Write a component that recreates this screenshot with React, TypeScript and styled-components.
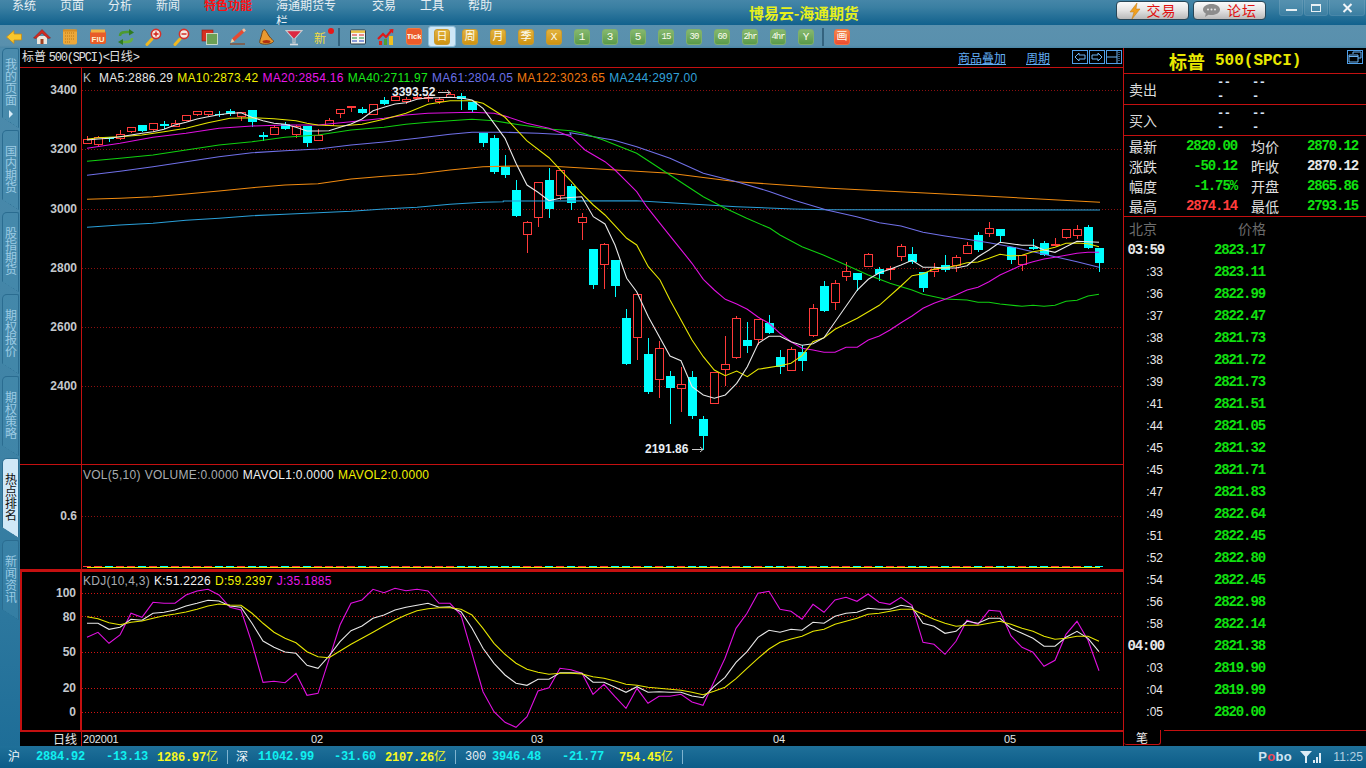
import React from 'react';
import styled, { createGlobalStyle, css } from 'styled-components';

const CJK = '"Noto Sans CJK SC", sans-serif';
const SANS = '"Liberation Sans", "Noto Sans CJK SC", sans-serif';
const MONO = '"Liberation Mono", "Noto Sans CJK SC", monospace';
const RED = '#c41010';

const Global = createGlobalStyle`
  html, body { margin: 0; padding: 0; width: 1366px; height: 768px; overflow: hidden; background: #000; }
  * { box-sizing: border-box; }
`;

const Page = styled.div`
  width: 1366px; height: 768px; display: flex; flex-direction: column; font-family: ${CJK};
`;

/* ---------- title bar ---------- */
const TitleBar = styled.header`
  height: 25px; display: flex; align-items: center; padding-left: 12px;
  background: linear-gradient(#4586a8, #3a7fa2 30%, #11618d);
`;
const Menu = styled.nav`display: flex; gap: 24px; width: 480px; flex: none;`;
const MenuItem = styled.span<{ $hot?: boolean }>`
  font-size: 12px; line-height: 16px; color: ${p => (p.$hot ? '#ff1010' : '#e6eef3')};
  font-weight: ${p => (p.$hot ? 700 : 400)};
`;
const AppTitle = styled.h1`
  margin: 0 0 0 257px; width: 110px; white-space: nowrap; flex: none; font-size: 15px; line-height: 18px; font-weight: 700; color: #e6f01c;
  letter-spacing: -0.1px;
`;
const LinkBtn = styled.button`
  height: 19px; width: 73px; margin-top: -4px; padding: 0; display: flex; align-items: center; justify-content: center; gap: 6px;
  border: 1px solid #274657; border-radius: 4px;
  background: linear-gradient(#fbfbfb, #e2e2e2 50%, #b9b9b9);
  color: #e01010; font: 14px/17px ${CJK}; letter-spacing: 1px;
  & + & { margin-left: 4px; }
  &:first-of-type { margin-left: 257px; }
`;
const WinBtns = styled.div`display: flex; gap: 1px; margin-left: 13px; align-self: flex-start;`;
const WinBtn = styled.div<{ $w: number }>`
  width: ${p => p.$w}px; height: 16px; display: flex; align-items: center; justify-content: center;
  background: rgba(255,255,255,.09); border: 1px solid rgba(255,255,255,.08); border-top: 0;
  border-radius: 0 0 3px 3px;
`;

/* ---------- toolbar ---------- */
const Toolbar = styled.div`
  height: 23px; display: flex; align-items: center;
  background: linear-gradient(#5b91ae, #5990ad 88%, #4a86a6);
`;
const ToolCell = styled.div<{ $active?: boolean }>`
  width: 28px; height: 21px; display: flex; align-items: center; justify-content: center; flex: none;
  border-radius: 3px; border: 1px solid transparent;
  ${p => p.$active && css`background: #cfe7f6; border-color: #8fc0dc;`}
`;
const ToolSep = styled.i`
  width: 8px; height: 18px; flex: none; display: block; position: relative;
  &::after { content: ''; position: absolute; left: 2px; top: 0; width: 2px; height: 18px; background: #34637e; }
`;
const Tile = styled.span<{ $tone: 'gold' | 'green' | 'red'; $tight?: boolean }>`
  width: 16px; height: 16px; display: flex; align-items: center; justify-content: center; border-radius: 3px;
  color: #fdfdf0; font: 11px/16px ${MONO}; overflow: hidden; white-space: nowrap;
  ${p => p.$tight && css`font-size: 9px; letter-spacing: -1px;`}
  background: ${p =>
    p.$tone === 'gold' ? 'linear-gradient(#e2b23e, #cf9312)'
      : p.$tone === 'green' ? 'linear-gradient(#86b86e, #5a9a4a)'
        : 'linear-gradient(#f58a50, #ee4c30)'};
  border: 1px solid ${p => (p.$tone === 'green' ? '#7fb06a' : p.$tone === 'gold' ? '#c89a30' : '#f47040')};
`;

/* ---------- body ---------- */
const Body = styled.div`flex: 1; display: flex; min-height: 0;`;
const SideTabs = styled.aside`
  width: 20px; flex: none; display: flex; flex-direction: column; gap: 2px; padding-left: 2px;
  background: linear-gradient(#4d8bac, #3d82a5 60%, #1e6e98);
`;
const SideTab = styled.div<{ $on?: boolean }>`
  position: relative; width: 17px; height: 80px; flex: none; padding-top: 14px;
  display: flex; flex-direction: column; align-items: center;
  border: 1px solid #2a6c90; border-bottom: 0; border-radius: 5px 2px 0 0;
  clip-path: polygon(0 0, 100% 0, 100% 100%, 0 calc(100% - 11px));
  background: ${p => (p.$on ? '#d0e8f7' : 'rgba(70,140,175,.35)')};
  color: ${p => (p.$on ? '#111' : '#9ccbe4')};
  &::after {
    content: ''; position: absolute; left: -1px; right: -1px; bottom: 0; height: 11px;
    background: linear-gradient(to top right, transparent calc(50% - 1px), #23658a calc(50% - 1px), #23658a 50%, transparent 50%);
  }
`;
const FirstTab = styled(SideTab)`padding-top: 9px;`;
const TabText = styled.span`writing-mode: vertical-rl; font-size: 12px; line-height: 14px;`;
const TabArrow = styled.i`
  margin-top: 4px; width: 0; height: 0; border-left: 4px solid #d8ecf8; border-top: 4px solid transparent; border-bottom: 4px solid transparent;
`;

const Main = styled.main`flex: 1; display: flex; background: #000; min-width: 0;`;
const ChartCol = styled.section`width: 1103px; flex: none; display: flex; flex-direction: column;`;
const ChartHead = styled.div`
  height: 20px; flex: none; display: flex; align-items: center; padding: 0 1px 1px 2px; border-bottom: 1px solid ${RED};
`;
const ChartName = styled.span`
  font-size: 12px; line-height: 16px; color: #e0e0e0; white-space: nowrap; flex: 1;
`;
const Narrow = styled.span`font-family: ${MONO}; font-size: 12px; letter-spacing: -1.2px;`;
const HeadLink = styled.a<{ $w: number }>`
  width: ${p => p.$w}px; font-size: 12px; line-height: 15px; color: #62aef5; text-decoration: underline; flex: none;
`;
const MiniBtn = styled.span`
  width: 16px; height: 14px; border: 1px solid #4f9fe8; margin-left: 1px; display: flex; align-items: center; justify-content: center; flex: none;
`;

const Pane = styled.div<{ $h: number; $active?: boolean }>`
  position: relative; height: ${p => p.$h}px; flex: none; display: flex;
  ${p => p.$active
    ? css`border-top: 2px solid ${RED}; border-bottom: 2px solid ${RED};`
    : css`border-bottom: 1px solid ${RED};`}
`;
const Axis = styled.div<{ $active?: boolean }>`
  position: relative; width: 62px; flex: none;
  border-right: ${p => (p.$active ? 2 : 1)}px solid ${RED};
  border-left: ${p => (p.$active ? `2px solid ${RED}` : 'none')};
`;
const Tick = styled.span<{ $y: number }>`
  position: absolute; right: 4px; top: ${p => p.$y}px; transform: translateY(-50%);
  font: 700 12px/14px ${SANS}; color: #c4c8cc;
`;
const Legend = styled.div<{ $top: number }>`
  position: absolute; left: 63px; top: ${p => p.$top}px; display: flex; gap: 4px; white-space: nowrap;
  font: 12px/14px ${SANS}; letter-spacing: 0.26px;
`;
const LegendItem = styled.span<{ $c: string; $w?: number }>`
  color: ${p => p.$c};
  ${p => p.$w && css`width: ${p.$w}px;`}
`;
const Plot = styled.svg`display: block; flex: none; width: 1041px; height: 100%;`;

const DateRow = styled.div`flex: 1; position: relative; display: flex;`;
const DateTag = styled.span`
  width: 62px; flex: none; border-right: 1px solid ${RED}; text-align: right; padding-right: 4px;
  font-size: 12px; line-height: 14px; color: #e8e8e8;
`;
const DateMark = styled.span<{ $x: number }>`
  position: absolute; left: ${p => p.$x}px; top: 1px; font: 11px/12px ${SANS}; color: #e6e6e6; letter-spacing: -0.2px;
`;

/* ---------- quote panel ---------- */
const Panel = styled.aside`flex: 1; display: flex; flex-direction: column; border-left: 1px solid ${RED}; min-width: 0;`;
const PanelTitle = styled.div`
  position: relative; height: 26px; flex: none; padding-left: 45px; display: flex; align-items: center; gap: 10px;
  border-bottom: 1px solid ${RED}; color: #e8e800; font-size: 18px; font-weight: 700; white-space: nowrap;
`;
const TitleLatin = styled.span`font: 700 16px/20px ${MONO};`;
const RestoreBtn = styled.span`
  position: absolute; right: 3px; top: 2px; width: 16px; height: 14px; border: 1px solid #4f9fe8;
`;
const BookRow = styled.div`
  height: 31px; flex: none; display: flex; align-items: center; padding-left: 5px; border-bottom: 1px solid ${RED};
`;
const BookLabel = styled.span`width: 88px; flex: none; font-size: 14px; line-height: 18px; color: #dcdcdc;`;
const Dashes = styled.span`
  width: 20px; margin-right: 15px; flex: none; font: 700 12px/14px ${MONO}; letter-spacing: -0.5px; color: #d8e4f8; margin-top: 2px;
`;
const Stats = styled.div`
  height: 81px; flex: none; padding-left: 5px; display: grid; grid-template-columns: 108px 107px; column-gap: 14px;
  grid-auto-rows: 20px; border-bottom: 1px solid ${RED};
`;
const Stat = styled.div`display: flex; justify-content: space-between; align-items: center;`;
const StatLabel = styled.span`font-size: 14px; line-height: 18px; color: #e0e0e0;`;
const Num = styled.span<{ $c: string }>`
  font: 700 14px/18px ${MONO}; letter-spacing: -1.1px; color: ${p => p.$c};
`;
const TapeHead = styled.div`
  height: 22px; flex: none; display: flex; padding-left: 5px; font-size: 14px; line-height: 22px; color: #6c6c6c; gap: 81px;
`;
const Tape = styled.div`flex: 1; display: flex; flex-direction: column;`;
const TapeRow = styled.div`
  height: 22px; flex: none; display: grid; grid-template-columns: 40px 101px; align-items: center;
`;
const TapeTime = styled.span<{ $bold?: boolean }>`
  text-align: right; color: #e8e8e8;
  ${p => p.$bold
    ? css`font: 700 14px/18px ${MONO}; letter-spacing: -1.1px;`
    : css`font: 12px/16px ${SANS}; padding-right: 1px;`}
`;
const TapeFoot = styled.div`height: 16px; flex: none; display: flex;`;
const FootTab = styled.span`
  width: 37px; height: 15px; flex: none; border: 1px solid ${RED}; border-width: 0 1px 1px 0; border-radius: 0 0 3px 3px;
  text-align: center; font-size: 12px; line-height: 15px; color: #eee;
`;
const FootRule = styled.span`flex: 1; margin-left: 3px; border-top: 1px solid ${RED};`;

/* ---------- status bar ---------- */
const StatusBar = styled.footer`
  height: 22px; flex: none; display: flex; align-items: center; padding-left: 8px;
  background: linear-gradient(#1f7099, #0c5c88);
`;
const SCell = styled.span<{ $w: number; $c: string; $left?: boolean; $plain?: boolean }>`
  width: ${p => p.$w}px; flex: none; color: ${p => p.$c}; text-align: ${p => (p.$left ? 'left' : 'right')}; white-space: nowrap;
  font: ${p => (p.$plain ? '400' : '700')} 12px/16px ${MONO}; letter-spacing: -0.2px;
`;
const Yi = styled.span`font-family: ${CJK}; font-weight: 400; letter-spacing: 0;`;
const SSep = styled.span<{ $w: number }>`
  width: ${p => p.$w}px; flex: none; position: relative; height: 14px;
  &::after { content: ''; position: absolute; left: 9px; top: 0; width: 1px; height: 14px; background: #7fb4d0; }
`;
const StatusRight = styled.div`margin-left: auto; display: flex; align-items: center; padding-right: 3px;`;
const Pobo = styled.span`font: 700 13px/16px ${SANS}; color: #cfe4f2; width: 42px; letter-spacing: 0.3px;`;
const PoboO = styled.span`color: #f04858;`;
const Clock = styled.span`font: 12px/16px ${SANS}; color: #b6d2e2; margin-left: 11px; letter-spacing: 0.1px;`;

/* ---------- data ---------- */
type C = [number, number, number, number, number];
const z7: C[] = [
  [168,178,188,190,1],[168,170,193,196,1],[170,172,178,182,0],[150,163,175,178,1],[142,142,152,155,1],[135,135,153,153,0],
  [130,130,147,150,1],[123,131,138,143,0],[120,130,137,137,1],[106,106,119,119,1],[94,94,101,104,1],[94,94,101,104,1],
  [93,101,105,107,0],[87,93,101,105,0],[97,97,107,120,1],[90,90,125,138,0],[155,166,171,180,0],[135,142,161,162,1],
  [127,132,146,146,0],[135,138,161,172,1],[138,138,188,197,0],[148,166,179,180,1],[114,121,136,136,1],[88,88,98,111,1],
  [78,78,80,93,1],[81,87,98,100,0],[73,73,103,103,1],[51,60,72,72,0],[48,48,59,59,1],[50,56,62,70,1],
  [46,50,53,53,1],[46,52,55,62,1],[50,58,62,68,1],[36,42,50,50,1],[40,48,56,86,0],[66,66,90,95,0],
];
const z8: C[] = [
  [38,38,68,77,0],[45,54,155,160,0],[105,140,165,170,0],[180,210,287,287,0],[303,307,341,395,1],[187,187,290,317,1],
  [145,180,266,290,0],[151,151,226,238,1],[192,198,248,268,0],[280,292,307,356,1],[387,387,495,503,0],[370,373,433,503,1],
  [420,420,497,527,0],[567,594,731,731,0],[523,523,650,718,1],[654,702,815,819,0],[663,685,778,830,1],[753,769,803,908,0],
  [741,793,805,872,1],[753,771,887,893,0],[888,897,947,987,0],[757,757,850,850,1],[648,733,748,795,1],[588,595,710,713,1],
  [606,660,677,695,0],[598,598,658,672,1],[585,609,638,638,0],
];
const z9: C[] = [
  [450,471,500,518,0],[442,448,510,510,1],[436,456,482,510,0],[312,325,405,407,1],[243,258,332,332,0],[240,250,307,327,1],
  [186,214,227,239,1],[220,220,240,270,0],[160,163,199,199,1],[200,208,221,240,0],[198,204,206,236,1],[132,139,167,180,1],
  [141,163,187,189,0],[216,216,264,273,0],[190,206,214,228,1],[165,196,209,212,0],[165,172,194,212,1],[127,136,158,158,1],
  [96,106,150,152,0],[66,83,100,107,1],[88,88,107,127,0],[142,142,179,188,0],[166,166,191,209,1],[117,142,147,147,0],
  [123,130,164,164,0],[114,133,136,136,1],[88,88,110,113,1],[76,88,104,114,1],[75,81,143,143,0],[144,144,188,212,0],
];
const conv = (a: C[], b: number) => a.map(c => [b + c[0] / 3, b + c[1] / 3, b + c[2] / 3, b + c[3] / 3, c[4]] as C);
const candles: C[] = [...conv(z7, 80), ...conv(z8, 120), ...conv(z9, 200)];
const cx = (i: number) => 87 + 11 * i;

const tr = (bx: number, by: number, a: number[]) => {
  const out: string[] = [];
  for (let i = 0; i < a.length; i += 2) out.push(`${(bx + a[i] / 3).toFixed(1)},${(by + a[i + 1] / 3).toFixed(1)}`);
  return out;
};
const p7 = (...a: number[]) => tr(80, 80, a);
const p8 = (...a: number[]) => tr(470, 120, a);
const p9 = (...a: number[]) => tr(760, 200, a);
const p3 = (...a: number[]) => tr(930, 0, a);

const MAS: { c: string; d: string[] }[] = [
  { c: '#2a9fd8', d: [
    ...p7(21,442,120,435,219,430,318,421,417,415,516,407,615,403,714,398,813,394,912,387,1011,382,1110,373,1209,367,1270,365),
    ...p8(100,243,500,242,800,260), ...p9(100,27,200,29), ...p3(510,630)] },
  { c: '#f08a10', d: [
    ...p7(21,358,120,355,219,350,318,342,417,333,516,323,615,315,714,311,813,297,912,289,1011,282,1110,270,1209,260,1308,258,1407,258),
    ...p8(600,160,800,185,1080,205), ...p3(0,580,150,587,510,607)] },
  { c: '#7070e8', d: [
    ...p7(21,286,120,274,219,260,318,245,417,230,516,218,615,212,714,207,813,195,912,186,1011,175,1110,163,1176,157,1275,157,1374,160,1473,165),
    ...p8(300,38,430,60,500,80,600,115,700,160,800,185,900,215),
    ...p9(100,0,200,30,290,50,358,68,423,78,489,97,555,108,621,118,687,128,753,140,819,155,885,170,951,185,1017,202)] },
  { c: '#10d010', d: [
    ...p7(21,244,120,235,219,225,318,210,417,195,516,185,615,172,714,165,813,150,912,142,978,133,1044,127,1110,122,1176,118,1242,122,1308,133,1407,147,1473,152),
    ...p8(340,40,400,60,500,100,600,165,700,230,766,265,830,295),
    ...p9(30,85,60,105,126,140,190,165,258,195,325,225,390,250,456,270,489,283,555,297,621,300,654,307,687,307,720,312,786,319,819,316,852,319,885,316,918,304,951,301,984,288,1017,283)] },
  { c: '#e010e0', d: [
    ...p7(21,205,120,190,219,172,318,160,417,145,516,138,615,135,714,135,813,125,912,115,978,105,1044,100,1110,98,1176,97,1242,100,1275,108,1340,130,1407,145,1473,170),
    ...p8(345,90,405,125,435,150,470,185,500,215,530,260,570,310,630,385,666,430,700,478,733,510,766,538,800,552,832,568,865,592),
    ...p9(0,355,27,370,60,400,93,425,126,445,159,450,192,457,225,457,258,442,292,442,325,420,358,408,390,390,423,368,456,348,489,325,522,310,555,298,588,285,621,270,654,262,687,245,720,225,753,210,786,195,819,185,852,177,885,172,918,166,951,160,984,157,1017,157)] },
  { c: '#e6e600', d: [
    ...p7(21,178,54,173,87,172,120,170,186,165,252,155,318,145,384,128,450,115,516,113,582,116,648,122,681,130,714,135,780,138,846,133,912,118,978,100,1044,73,1110,62,1176,62,1209,70,1275,112,1340,182,1407,233),
    ...p8(300,180,335,220,370,255,405,285,470,355,500,375,535,440,570,480,600,540,633,600,666,660,700,710,733,750,766,767,800,753,832,770,865,747),
    ...p9(0,507,60,497,93,490,126,467,159,425,192,413,225,388,292,355,358,316,423,258,456,227,489,221,522,207,555,203,588,197,621,188,654,186,687,175,720,163,753,168,786,166,819,155,852,150,885,142,918,130,951,129,984,131,1017,140)] },
  { c: '#e8e8e8', d: [
    ...p7(21,180,54,177,87,175,120,170,153,165,186,160,219,155,252,148,285,135,318,127,351,117,384,110,417,104,450,100,483,98,516,112,549,122,582,130,615,133,648,142,681,153,714,153,747,152,780,142,813,132,846,117,879,92,912,82,945,72,978,68,1011,58,1044,53,1077,53,1110,52,1143,54,1176,60,1209,85,1242,130,1275,175,1308,250,1341,315,1374,337,1407,362,1440,355),
    ...p8(335,230,370,290,405,312,435,375,470,475,500,515,535,590,600,708,633,722,666,800,700,825,733,835,766,825,800,790,832,740,865,670),
    ...p9(27,409,60,409,93,425,126,436,159,431,192,413,292,270,325,238,358,218,390,208,423,195,456,181,489,202,522,202,555,204,588,204,621,197,654,170,687,150,720,127,753,131,786,136,819,136,852,150,885,157,918,140,951,124,984,125,1017,127)] },
];

const kdj = (a: number[], b: number[]) =>
  [...a, ...b].map((z, i) => `${cx(i)},${(570 + z / 3).toFixed(1)}`).join(' ');
const J = kdj(
  [202,187,220,195,130,142,97,100,100,75,63,58,75,112,120,220,337,334,338,310,376,370,268,165,100,90,58,68,55,62,58,63,100,100,135,250,365,425,457,472,440,363,353,295,299,310,373],
  [343,380,415,355,400,379,379,373,396,406,335,265,175,130,70,64,118,124,148,103,127,90,82,94,72,97,103,82,106,217,223,253,214,151,163,121,124,198,232,247,289,271,193,154,211,302]);
const K = kdj(
  [160,160,178,172,148,151,130,127,120,108,100,91,93,108,112,160,213,232,246,250,286,295,258,215,182,168,145,135,120,112,106,100,112,110,125,175,235,280,315,340,346,328,328,308,308,310,337],
  [337,352,367,350,367,365,367,367,378,383,350,322,277,245,202,181,187,178,181,157,160,139,130,127,115,118,118,106,112,160,169,190,184,154,160,145,145,175,190,205,229,229,202,184,205,245]);
const D = kdj(
  [140,146,158,164,157,153,145,137,132,126,118,108,102,105,106,130,160,187,205,218,245,260,263,243,223,205,187,168,150,135,122,116,113,113,118,135,175,220,253,280,298,307,313,310,310,312,320],
  [325,333,343,346,352,355,358,361,367,374,364,352,326,295,265,237,217,207,199,184,178,163,154,145,133,130,124,118,118,133,148,160,169,166,166,160,154,163,175,184,199,208,205,199,199,214]);

const menu = ['系统','页面','分析','新闻','特色功能','海通期货专栏','交易','工具','帮助'];
const tape: [string, string, boolean?][] = [
  ['03:59','2823.17',true],[':33','2823.11'],[':36','2822.99'],[':37','2822.47'],[':38','2821.73'],[':38','2821.72'],
  [':39','2821.73'],[':41','2821.51'],[':44','2821.05'],[':45','2821.32'],[':45','2821.71'],[':47','2821.83'],
  [':49','2822.64'],[':51','2822.45'],[':52','2822.80'],[':54','2822.45'],[':56','2822.98'],[':58','2822.14'],
  ['04:00','2821.38',true],[':03','2819.90'],[':04','2819.99'],[':05','2820.00'],
];
const GREEN = '#10e010';
const stats: [string, string, string][] = [
  ['最新','2820.00',GREEN],['均价','2870.12',GREEN],['涨跌','-50.12',GREEN],['昨收','2870.12','#e8e8e8'],
  ['幅度','-1.75%',GREEN],['开盘','2865.86',GREEN],['最高','2874.14','#ff3c3c'],['最低','2793.15',GREEN],
];

/* ---------- icons ---------- */
const Ico: React.FC<{ children: React.ReactNode; s?: number }> = ({ children, s = 18 }) => (
  <svg width={s} height={s} viewBox="0 0 18 18">{children}</svg>
);
const IBack = () => <Ico><polygon points="1.5,9 9,2.5 9,6 16.5,6 16.5,12 9,12 9,15.5" fill="#f8c62c" stroke="#c68a14" strokeWidth=".8" /></Ico>;
const IHome = () => <Ico><rect x="4" y="8" width="10" height="8" fill="#ece6dc" /><rect x="7.5" y="11" width="3" height="5" fill="#a04020" /><polygon points="0.5,10 9,1.5 17.5,10 15,10.5 9,5 3,10.5" fill="#d42a20" stroke="#8c1410" strokeWidth=".5" /></Ico>;
const INote = () => <Ico><rect x="2" y="1.5" width="14" height="15" rx="2" fill="#eca83a" /><path d="M4 5h10M4 8h10M4 11h10M4 14h6" stroke="#b87414" strokeWidth="1" strokeDasharray="1 1" /><rect x="2" y="1.5" width="14" height="2" fill="#d88c20" /></Ico>;
const IFiu = () => <Ico><rect x="1" y="3" width="16" height="13" rx="2" fill="#e85c28" /><rect x="2" y="1.5" width="14" height="3" fill="#f0b040" /><text x="9" y="13.5" textAnchor="middle" fontFamily="Liberation Sans" fontWeight="700" fontSize="8" fill="#fff3d0">FIU</text></Ico>;
const IRefresh = () => <Ico><path d="M3 8 C3 4 7 4 10 4 L13 4" fill="none" stroke="#4c9a30" strokeWidth="2.4" /><polygon points="12,1 17,4.4 12,7.5" fill="#2f7c20" /><path d="M15 10 C15 14 11 14 8 14 L5 14" fill="none" stroke="#68b040" strokeWidth="2.4" /><polygon points="6,11 1,14 6,17" fill="#2f7c20" /></Ico>;
const IZoom: React.FC<{ plus?: boolean }> = ({ plus }) => <Ico><path d="M2 16.5 L7 11" stroke="#f0b820" strokeWidth="3" strokeLinecap="round" /><circle cx="11" cy="6" r="4.6" fill="#f4e8e0" stroke="#d83028" strokeWidth="1.6" /><path d={plus ? 'M8.5 6h5M11 3.5v5' : 'M8.5 6h5'} stroke="#d02018" strokeWidth="1.4" /></Ico>;
const IWin = () => <Ico><rect x="1" y="2" width="11" height="11" fill="#d43020" stroke="#8c1810" strokeWidth=".6" /><rect x="5.5" y="5.5" width="11" height="11" fill="#6ca054" stroke="#e0e8d8" strokeWidth=".8" /></Ico>;
const IPencil = () => <Ico><path d="M4 12 L14 3" stroke="#e84a30" strokeWidth="3.4" /><path d="M14 3 L16 1.4" stroke="#f4c0a0" strokeWidth="3" /><path d="M1 16 H16" stroke="#8c5030" strokeWidth="1.4" /><polygon points="1.5,15 3,10.5 5.5,13.5" fill="#f0d0a0" /></Ico>;
const IBell = () => <Ico><path d="M7 1.5 C9 2 10 5 12 8 C14 11 16.5 12 16.5 13.5 C15 16 8 17 3.5 15.5 C2 15 3 12 4 9 C5 6 5 3 7 1.5Z" fill="#e89a30" stroke="#6c3c10" strokeWidth=".9" /><ellipse cx="9.5" cy="13.5" rx="4" ry="1.6" fill="#b03010" /></Ico>;
const IGlass = () => <Ico><polygon points="1.5,3 16.5,3 10,10 8,10" fill="#dc2840" /><path d="M1 2.6H17L10 10.5V15H8V10.5Z" fill="none" stroke="#c8ccd0" strokeWidth="1.1" /><path d="M5 16.5H13" stroke="#d8dce0" strokeWidth="1.6" /></Ico>;
const INew = () => <span style={{ position: 'relative', display: 'block', width: 18, height: 18 }}><NewChar>新</NewChar><NewDot /></span>;
const NewChar = styled.span`position: absolute; left: 1px; top: 3px; font-size: 12px; line-height: 14px; color: #f2dc40;`;
const NewDot = styled.i`position: absolute; right: -3px; top: 0; width: 6px; height: 6px; border-radius: 50%; background: #e81818;`;
const ITable = () => <Ico><rect x="1.5" y="2" width="15" height="14" rx="1" fill="#f6f6f2" stroke="#2c3c48" /><rect x="2" y="2.5" width="14" height="2.4" fill="#e8c040" /><path d="M3 7h5M10 7h5" stroke="#d82020" strokeWidth="1.1" /><path d="M3 10h5M10 10h5" stroke="#209030" strokeWidth="1.1" /><path d="M3 13h5M10 13h5" stroke="#2040c0" strokeWidth="1.1" /></Ico>;
const IChart = () => <Ico><path d="M1 11 L6 6 L9 9 L15 2" fill="none" stroke="#e01818" strokeWidth="2.2" /><polygon points="12,1.5 16.5,1 16,5.5" fill="#e01818" /><rect x="2" y="13" width="3" height="4" fill="#e02818" /><rect x="7" y="11" width="3" height="6" fill="#50a030" /><rect x="12" y="8" width="4" height="9" fill="#f0c020" /></Ico>;
const TickTile = styled(Tile)`width: 16px; height: 17px; font: 700 8px/16px ${SANS}; letter-spacing: -.2px; background: #ec5c2c; border-color: #f07840;`;
const Bolt = () => <svg width="12" height="16" viewBox="0 0 12 16"><polygon points="8,0 1,9 5,9 3,16 11,6 7,6" fill="#f0a020" stroke="#c07810" strokeWidth=".5" /></svg>;
const Chat = () => <svg width="19" height="15" viewBox="0 0 19 15"><path d="M9.5 1C14.5 1 18 3.5 18 6.5S14.5 12 9.5 12c-1 0-2 0-3-.3L3 14l.8-3.4C2 9.6 1 8.2 1 6.5 1 3.5 4.500 1 9.500 1Z" fill="#8c8c8c" /><circle cx="6" cy="6.500" r="1" fill="#e8e8e8" /><circle cx="9.500" cy="6.500" r="1" fill="#e8e8e8" /><circle cx="13" cy="6.500" r="1" fill="#e8e8e8" /></svg>;

const GOLD = ['周','月','季','X'];
const GREENS = ['1','3','5','15','30','60','2hr','4hr','Y'];

const Candle: React.FC<{ c: C; i: number }> = ({ c, i }) => {
  const [hi, top, bot, lo, up] = c;
  const x = cx(i);
  const color = up ? '#ff3a3a' : '#00ffff';
  const t = Math.round(top), b = Math.round(bot), h = Math.round(hi), l = Math.round(lo);
  return (
    <g shapeRendering="crispEdges">
      <line x1={x + .5} x2={x + .5} y1={h} y2={l + 1} stroke={color} />
      {up
        ? <rect x={x - 3.5} y={t + .5} width={8} height={Math.max(b - t, 1)} fill="#000" stroke={color} />
        : <rect x={x - 4} y={t} width={9} height={Math.max(b - t, 1)} fill={color} />}
    </g>
  );
};

const GridLine: React.FC<{ y: number; c: string }> = ({ y, c }) => (
  <line x1={82} x2={1123} y1={y + .5} y2={y + .5} stroke={c} strokeDasharray="1 2" shapeRendering="crispEdges" />
);

export default function App() {
  return (
    <Page>
      <Global />
      <TitleBar>
        <Menu>
          {menu.map(m => <MenuItem key={m} $hot={m === '特色功能'}>{m}</MenuItem>)}
        </Menu>
        <AppTitle>博易云-海通期货</AppTitle>
        <LinkBtn><Bolt />交易</LinkBtn>
        <LinkBtn><Chat />论坛</LinkBtn>
        <WinBtns>
          <WinBtn $w={24}><svg width="11" height="10" viewBox="0 0 11 10"><rect x="0" y="6" width="11" height="2" fill="#e8f0f4" /></svg></WinBtn>
          <WinBtn $w={24}><svg width="11" height="10" viewBox="0 0 11 10"><rect x=".5" y="1.500" width="9" height="7" fill="none" stroke="#e8f0f4" /><rect x="0" y="1" width="10" height="2" fill="#e8f0f4" /></svg></WinBtn>
          <WinBtn $w={36}><svg width="11" height="10" viewBox="0 0 11 10"><path d="M1.500 1l8 8M9.500 1l-8 8" stroke="#f0f4f8" strokeWidth="2" /></svg></WinBtn>
        </WinBtns>
      </TitleBar>

      <Toolbar>
        <ToolCell><IBack /></ToolCell>
        <ToolCell><IHome /></ToolCell>
        <ToolCell><INote /></ToolCell>
        <ToolCell><IFiu /></ToolCell>
        <ToolCell><IRefresh /></ToolCell>
        <ToolCell><IZoom plus /></ToolCell>
        <ToolCell><IZoom /></ToolCell>
        <ToolCell><IWin /></ToolCell>
        <ToolCell><IPencil /></ToolCell>
        <ToolCell><IBell /></ToolCell>
        <ToolCell><IGlass /></ToolCell>
        <ToolCell><INew /></ToolCell>
        <ToolSep />
        <ToolCell><ITable /></ToolCell>
        <ToolCell><IChart /></ToolCell>
        <ToolCell><TickTile $tone="red">Tick</TickTile></ToolCell>
        <ToolCell $active><Tile $tone="gold">日</Tile></ToolCell>
        {GOLD.map(t => <ToolCell key={t}><Tile $tone="gold">{t}</Tile></ToolCell>)}
        {GREENS.map(t => <ToolCell key={t}><Tile $tone="green" $tight={t.length > 1}>{t}</Tile></ToolCell>)}
        <ToolSep />
        <ToolCell><Tile $tone="red">画</Tile></ToolCell>
      </Toolbar>

      <Body>
        <SideTabs>
          <FirstTab><TabText>我的页面</TabText><TabArrow /></FirstTab>
          <SideTab><TabText>国内期货</TabText></SideTab>
          <SideTab><TabText>股指期货</TabText></SideTab>
          <SideTab><TabText>期权报价</TabText></SideTab>
          <SideTab><TabText>期权策略</TabText></SideTab>
          <SideTab $on><TabText>热点排名</TabText></SideTab>
          <SideTab><TabText>新闻资讯</TabText></SideTab>
        </SideTabs>

        <Main>
          <ChartCol>
            <ChartHead>
              <ChartName>标普 <Narrow>500(SPCI)&lt;</Narrow>日线<Narrow>&gt;</Narrow></ChartName>
              <HeadLink $w={68}>商品叠加</HeadLink>
              <HeadLink $w={45}>周期</HeadLink>
              <MiniBtn><svg width="12" height="10" viewBox="0 0 12 10"><path d="M1 5l4-4v2h6v4H5v2z" fill="none" stroke="#6cb4f4" /></svg></MiniBtn>
              <MiniBtn><svg width="12" height="10" viewBox="0 0 12 10"><path d="M11 5L7 1v2H1v4h6v2z" fill="none" stroke="#6cb4f4" /></svg></MiniBtn>
              <MiniBtn><svg width="14" height="12" viewBox="0 0 14 12"><path d="M0 6h10M10 0v12" stroke="#6cb4f4" /><path d="M12 1v10" stroke="#6cb4f4" strokeDasharray="1 1" /></svg></MiniBtn>
            </ChartHead>

            <Pane $h={397}>
              <Axis>
                {[['3400',22],['3200',81],['3000',141],['2800',200],['2600',259],['2400',318]].map(([t, y]) => (
                  <Tick key={t} $y={y as number}>{t}</Tick>
                ))}
              </Axis>
              <Legend $top={3}>
                <LegendItem $c="#b4b8bc" $w={12}>K</LegendItem>
                <LegendItem $c="#e8e8e8">MA5:2886.29</LegendItem>
                <LegendItem $c="#f0f000">MA10:2873.42</LegendItem>
                <LegendItem $c="#e818e8">MA20:2854.16</LegendItem>
                <LegendItem $c="#18e818">MA40:2711.97</LegendItem>
                <LegendItem $c="#6a70e8">MA61:2804.05</LegendItem>
                <LegendItem $c="#f07810">MA122:3023.65</LegendItem>
                <LegendItem $c="#30a0d8">MA244:2997.00</LegendItem>
              </Legend>
              <Plot viewBox="82 68 1041 396">
                {[90, 149, 209, 268, 327, 386].map(y => <GridLine key={y} y={y} c="#8c1010" />)}
                {candles.map((c, i) => <Candle key={i} c={c} i={i} />)}
                {MAS.map(m => <polyline key={m.c} points={m.d.join(' ')} fill="none" stroke={m.c} strokeWidth="1.1" />)}
                <text x="392" y="96" fontFamily="Liberation Sans" fontWeight="700" fontSize="12" fill="#e8eef4">3393.52</text>
                <path d="M438 92.500H450M447 90l3 2.500-3 2.500" fill="none" stroke="#c8c8c8" />
                <text x="645" y="453" fontFamily="Liberation Sans" fontWeight="700" fontSize="12" fill="#e8eef4">2191.86</text>
                <path d="M692 449.500H703M700 447l3 2.500-3 2.500" fill="none" stroke="#c8c8c8" />
              </Plot>
            </Pane>

            <Pane $h={105}>
              <Axis><Tick $y={51}>0.6</Tick></Axis>
              <Legend $top={3}>
                <LegendItem $c="#a8acb0">VOL(5,10)</LegendItem>
                <LegendItem $c="#a8acb0">VOLUME:0.0000</LegendItem>
                <LegendItem $c="#f0f0f0">MAVOL1:0.0000</LegendItem>
                <LegendItem $c="#f0f000">MAVOL2:0.0000</LegendItem>
              </Legend>
              <Plot viewBox="82 465 1041 104">
                <GridLine y={516} c="#8c1010" />
                {candles.map((c, i) => (
                  <rect key={i} x={cx(i) - 4} y={566} width={8} height={1} fill={c[4] ? '#ff3a3a' : '#00ffff'} shapeRendering="crispEdges" />
                ))}
                <rect x={87} y={567} width={1013} height={1} fill="#e8e800" shapeRendering="crispEdges" />
              </Plot>
            </Pane>

            <Pane $h={162} $active>
              <Axis $active>
                {[['100',21],['80',45],['50',80],['20',116],['0',140]].map(([t, y]) => (
                  <Tick key={t} $y={y as number}>{t}</Tick>
                ))}
              </Axis>
              <Legend $top={2}>
                <LegendItem $c="#a8acb0">KDJ(10,4,3)</LegendItem>
                <LegendItem $c="#f0f0f0">K:51.2226</LegendItem>
                <LegendItem $c="#f0f000">D:59.2397</LegendItem>
                <LegendItem $c="#e818e8">J:35.1885</LegendItem>
              </Legend>
              <Plot viewBox="82 572 1041 158">
                {[593, 616, 652, 688, 712].map(y => <GridLine key={y} y={y} c="#d01414" />)}
                <polyline points={J} fill="none" stroke="#e010e0" strokeWidth="1.1" />
                <polyline points={K} fill="none" stroke="#e8e8e8" strokeWidth="1.1" />
                <polyline points={D} fill="none" stroke="#e6e600" strokeWidth="1.1" />
              </Plot>
            </Pane>

            <DateRow>
              <DateTag>日线</DateTag>
              {[['202001', 63], ['02', 291], ['03', 511], ['04', 753], ['05', 984]].map(([t, x]) => (
                <DateMark key={t} $x={x as number}>{t}</DateMark>
              ))}
            </DateRow>
          </ChartCol>

          <Panel>
            <PanelTitle>
              <span>标普</span><TitleLatin>500(SPCI)</TitleLatin>
              <RestoreBtn><svg width="14" height="12" viewBox="0 0 14 12" style={{ display: 'block' }}><path d="M5 3V1h8v6h-3M1 4h9v7H1z" fill="none" stroke="#6cb4f4" /><path d="M1 5.500h9" stroke="#6cb4f4" /></svg></RestoreBtn>
            </PanelTitle>
            <BookRow><BookLabel>卖出</BookLabel><Dashes>---</Dashes><Dashes>---</Dashes></BookRow>
            <BookRow><BookLabel>买入</BookLabel><Dashes>---</Dashes><Dashes>---</Dashes></BookRow>
            <Stats>
              {stats.map(([l, v, c]) => (
                <Stat key={l}><StatLabel>{l}</StatLabel><Num $c={c}>{v}</Num></Stat>
              ))}
            </Stats>
            <TapeHead><span>北京</span><span>价格</span></TapeHead>
            <Tape>
              {tape.map(([t, p, b], i) => (
                <TapeRow key={i}>
                  <TapeTime $bold={b}>{t}</TapeTime>
                  <Num $c={GREEN} style={{ textAlign: 'right' }}>{p}</Num>
                </TapeRow>
              ))}
            </Tape>
            <TapeFoot><FootTab>笔</FootTab><FootRule /></TapeFoot>
          </Panel>
        </Main>
      </Body>

      <StatusBar>
        <SCell $w={28} $c="#f0f6fa" $left $plain><Yi>沪</Yi></SCell>
        <SCell $w={49} $c="#10f0f0">2884.92</SCell>
        <SCell $w={63} $c="#10f0f0">-13.13</SCell>
        <SCell $w={70} $c="#f8f820">1286.97<Yi>亿</Yi></SCell>
        <SSep $w={18} />
        <SCell $w={22} $c="#f0f6fa" $left $plain><Yi>深</Yi></SCell>
        <SCell $w={55} $c="#10f0f0">11042.99</SCell>
        <SCell $w={63} $c="#10f0f0">-31.60</SCell>
        <SCell $w={70} $c="#f8f820">2107.26<Yi>亿</Yi></SCell>
        <SSep $w={19} />
        <SCell $w={27} $c="#e8eef2" $left $plain>300</SCell>
        <SCell $w={49} $c="#10f0f0">3946.48</SCell>
        <SCell $w={63} $c="#10f0f0">-21.77</SCell>
        <SCell $w={69} $c="#f8f820">754.45<Yi>亿</Yi></SCell>
        <SSep $w={20} />
        <StatusRight>
          <Pobo>P<PoboO>o</PoboO>bo</Pobo>
          <svg width="22" height="14" viewBox="0 0 22 14">
            <path d="M0 1H12L7 6.500V13H5V6.500Z" fill="#dcecf6" />
            <rect x="13" y="10" width="2" height="3" fill="#dcecf6" />
            <rect x="16" y="7" width="2" height="6" fill="#dcecf6" />
            <rect x="19" y="3" width="2" height="10" fill="#dcecf6" />
          </svg>
          <Clock>11:25</Clock>
        </StatusRight>
      </StatusBar>
    </Page>
  );
}
